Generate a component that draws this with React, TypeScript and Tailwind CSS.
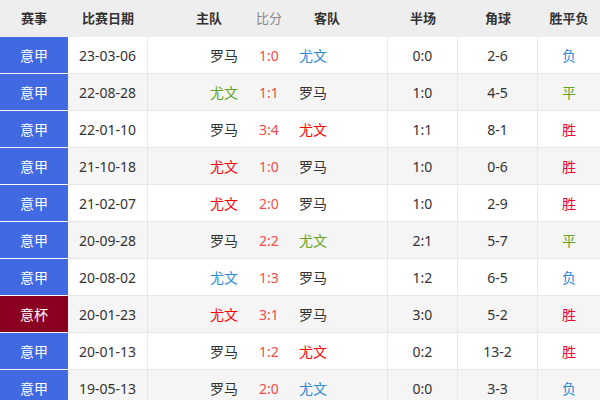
import React from 'react';

type Row = {
  league: string;
  date: string;
  home: string;
  homeColor: string;
  score: string;
  away: string;
  awayColor: string;
  half: string;
  corner: string;
  result: string;
};

const DARK = 'text-[#333333]';
const BLUE = 'text-[#2b8ad9]';
const RED = 'text-[#ff0000]';
const GREEN = 'text-[#64a31a]';

const rows: Row[] = [
  { league: '意甲', date: '23-03-06', home: '罗马', homeColor: DARK, score: '1:0', away: '尤文', awayColor: BLUE, half: '0:0', corner: '2-6', result: '负' },
  { league: '意甲', date: '22-08-28', home: '尤文', homeColor: GREEN, score: '1:1', away: '罗马', awayColor: DARK, half: '1:0', corner: '4-5', result: '平' },
  { league: '意甲', date: '22-01-10', home: '罗马', homeColor: DARK, score: '3:4', away: '尤文', awayColor: RED, half: '1:1', corner: '8-1', result: '胜' },
  { league: '意甲', date: '21-10-18', home: '尤文', homeColor: RED, score: '1:0', away: '罗马', awayColor: DARK, half: '1:0', corner: '0-6', result: '胜' },
  { league: '意甲', date: '21-02-07', home: '尤文', homeColor: RED, score: '2:0', away: '罗马', awayColor: DARK, half: '1:0', corner: '2-9', result: '胜' },
  { league: '意甲', date: '20-09-28', home: '罗马', homeColor: DARK, score: '2:2', away: '尤文', awayColor: GREEN, half: '2:1', corner: '5-7', result: '平' },
  { league: '意甲', date: '20-08-02', home: '尤文', homeColor: BLUE, score: '1:3', away: '罗马', awayColor: DARK, half: '1:2', corner: '6-5', result: '负' },
  { league: '意杯', date: '20-01-23', home: '尤文', homeColor: RED, score: '3:1', away: '罗马', awayColor: DARK, half: '3:0', corner: '5-2', result: '胜' },
  { league: '意甲', date: '20-01-13', home: '罗马', homeColor: DARK, score: '1:2', away: '尤文', awayColor: RED, half: '0:2', corner: '13-2', result: '胜' },
  { league: '意甲', date: '19-05-13', home: '罗马', homeColor: DARK, score: '2:0', away: '尤文', awayColor: BLUE, half: '0:0', corner: '3-3', result: '负' },
];

const resultColor = (r: string) => {
  if (r === '胜') return 'text-[#ee0033]';
  if (r === '平') return 'text-[#64a31a]';
  return 'text-[#2b8ad9]';
};

const cols = 'grid grid-cols-[68px_80px_102px_38px_100px_70px_80px_62px]';

const App: React.FC = () => {
  return (
    <div className="w-[600px] h-[400px] overflow-hidden bg-white font-['Noto_Sans','Noto_Sans_CJK_SC',sans-serif]">
      <div className={`${cols} h-[37px] items-center bg-[#eeeeee] text-[13px] text-[#333333] font-bold`}>
        <div className="text-center">赛事</div>
        <div className="text-center">比赛日期</div>
        <div className="text-right pr-[28px]">主队</div>
        <div className="text-center font-normal text-[#888888]">比分</div>
        <div className="text-left pl-[26px]">客队</div>
        <div className="text-center">半场</div>
        <div className="text-center">角球</div>
        <div className="text-center">胜平负</div>
      </div>

      {rows.map((row, i) => (
        <div
          key={i}
          className={`${cols} h-[37px] text-[14px] ${i % 2 === 0 ? 'bg-white' : 'bg-[#f5f5f5]'}`}
        >
          <div
            className={`flex items-center justify-center border-b border-white text-white ${
              row.league === '意杯' ? 'bg-[#8b0021]' : 'bg-[#4169e1]'
            }`}
          >
            {row.league}
          </div>
          <div className="flex items-center justify-center border-b border-r border-[#e8e8e8] text-[#333333]">
            {row.date}
          </div>
          <div className={`flex items-center justify-end pr-[12px] border-b border-[#e8e8e8] ${row.homeColor}`}>
            {row.home}
          </div>
          <div className="flex items-center justify-center border-b border-[#e8e8e8] text-[#f34b4b]">
            {row.score}
          </div>
          <div className={`flex items-center justify-start pl-[11px] border-b border-r border-[#e8e8e8] ${row.awayColor}`}>
            {row.away}
          </div>
          <div className="flex items-center justify-center border-b border-r border-[#e8e8e8] text-[#333333]">
            {row.half}
          </div>
          <div className="flex items-center justify-center border-b border-r border-[#e8e8e8] text-[#333333]">
            {row.corner}
          </div>
          <div className={`flex items-center justify-center border-b border-[#e8e8e8] ${resultColor(row.result)}`}>
            {row.result}
          </div>
        </div>
      ))}
    </div>
  );
};

export default App;
